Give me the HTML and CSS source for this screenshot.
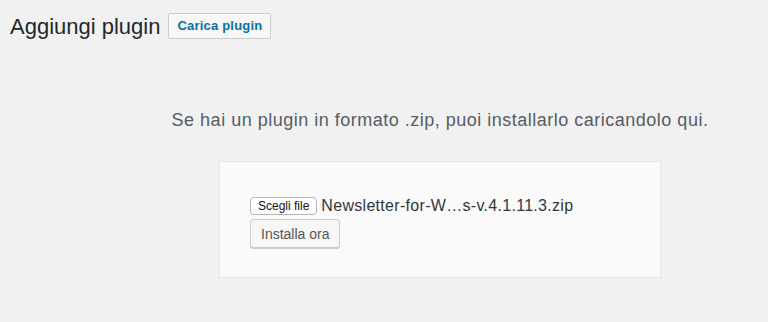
FILE: index.html
```html
<html>
  <head>
    <link rel="stylesheet" href="styles.css">
    <title>Aggiungi plugin</title>
  </head>
  <body>
    <div class="wrap">
      <div class="page-head">
        <h1>Aggiungi plugin</h1>
        <a class="title-action" href="#">Carica plugin</a>
      </div>

      <div class="upload-plugin">
        <p class="install-help">Se hai un plugin in formato .zip, puoi installarlo caricandolo qui.</p>
        <form class="upload-form">
          <div class="file-row">
            <button type="button" class="file-pick">Scegli file</button>
            <span class="file-name">Newsletter-for-W…s-v.4.1.11.3.zip</span>
          </div>
          <button type="submit" class="install-btn">Installa ora</button>
        </form>
      </div>
    </div>
  </body>
</html>
```

FILE: styles.css
```css
body {
  margin: 0;
  background: #f1f1f1;
  font-family: "Liberation Sans", Arial, sans-serif;
  color: #444;
}

.wrap {
  padding: 13px 10px 0 10px;
}

.page-head {
  display: flex;
  align-items: center;
}

.page-head h1 {
  margin: 0;
  font-size: 22px;
  font-weight: 400;
  color: #23282d;
  line-height: 25px;
}

.title-action {
  margin-left: 8px;
  padding: 0 8px;
  height: 24px;
  line-height: 24px;
  border: 1px solid #ccc;
  border-radius: 2px;
  background: #f7f7f7;
  color: #0073aa;
  font-size: 13px;
  font-weight: 600;
  letter-spacing: 0.2px;
  text-decoration: none;
}

.upload-plugin {
  margin-left: 112px;
  display: flex;
  flex-direction: column;
  align-items: center;
}

.install-help {
  margin: 70px 0 0 0;
  font-size: 18px;
  letter-spacing: 0.5px;
  color: #555d66;
  line-height: 22px;
}

.upload-form {
  margin-top: 30px;
  width: 380px;
  padding: 35px 30px 29px 30px;
  background: #fafafa;
  border: 1px solid #e5e5e5;
}

.file-row {
  display: flex;
  align-items: center;
}

.file-pick {
  font-family: "Liberation Sans", Arial, sans-serif;
  font-size: 12px;
  height: 18px;
  padding: 0 7px;
  background: #fff;
  border: 1px solid #b5b5b5;
  border-radius: 4px;
  color: #111;
}

.file-name {
  margin-left: 4px;
  font-size: 16px;
  letter-spacing: 0.3px;
  color: #32373c;
}

.install-btn {
  margin-top: 4px;
  height: 29px;
  padding: 0 10px;
  font-family: "Liberation Sans", Arial, sans-serif;
  font-size: 14px;
  color: #555;
  background: #f7f7f7;
  border: 1px solid #ccc;
  border-radius: 3px;
  box-shadow: 0 1px 0 #ccc;
}
```
